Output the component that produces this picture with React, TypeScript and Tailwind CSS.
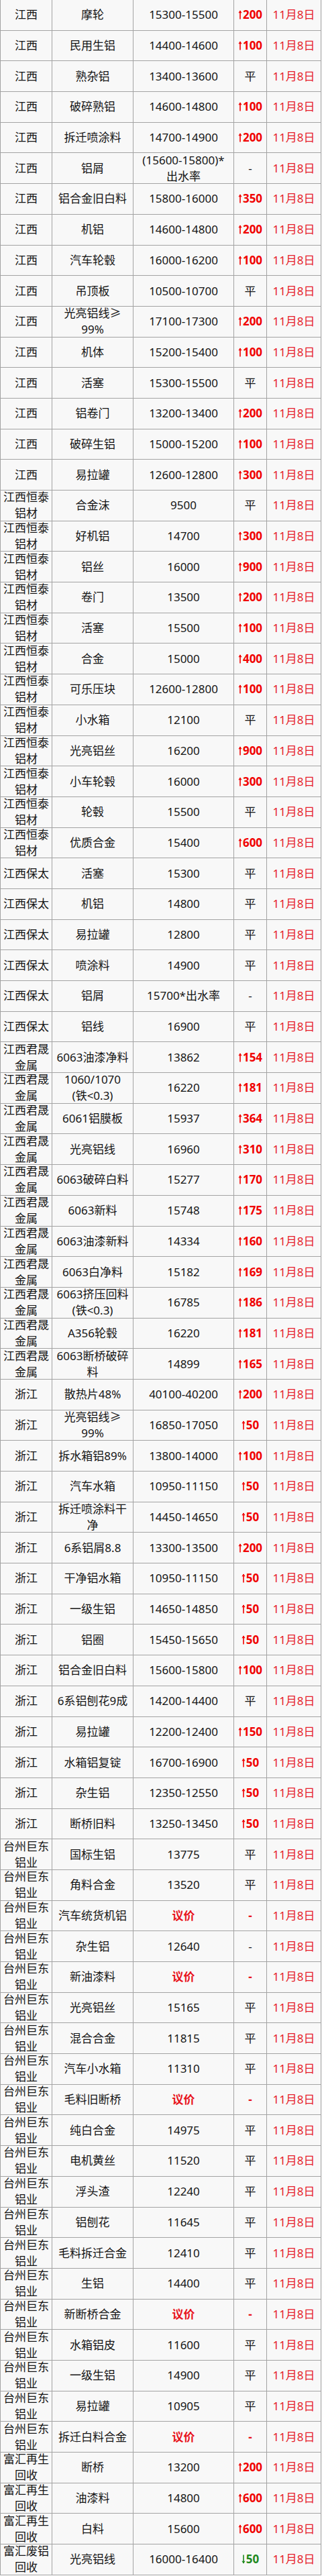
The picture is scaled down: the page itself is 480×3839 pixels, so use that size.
import { FC } from "react";

// company, item, price, change
// change: "u200" up / "d50" down / "平" flat / "-" plain dash / "x" red dash
type Row = [string, string, string, string];

const JX = "江西";
const HT = "江西恒泰\n铝材";
const BT = "江西保太";
const JS = "江西君晟\n金属";
const ZJ = "浙江";
const TZ = "台州巨东\n铝业";
const FH = "富汇再生\n回收";

const rows: Row[] = [
  [JX, "摩轮", "15300-15500", "u200"],
  [JX, "民用生铝", "14400-14600", "u100"],
  [JX, "熟杂铝", "13400-13600", "平"],
  [JX, "破碎熟铝", "14600-14800", "u100"],
  [JX, "拆迁喷涂料", "14700-14900", "u200"],
  [JX, "铝屑", "(15600-15800)*\n出水率", "-"],
  [JX, "铝合金旧白料", "15800-16000", "u350"],
  [JX, "机铝", "14600-14800", "u200"],
  [JX, "汽车轮毂", "16000-16200", "u100"],
  [JX, "吊顶板", "10500-10700", "平"],
  [JX, "光亮铝线≥\n99%", "17100-17300", "u200"],
  [JX, "机体", "15200-15400", "u100"],
  [JX, "活塞", "15300-15500", "平"],
  [JX, "铝卷门", "13200-13400", "u200"],
  [JX, "破碎生铝", "15000-15200", "u100"],
  [JX, "易拉罐", "12600-12800", "u300"],
  [HT, "合金沫", "9500", "平"],
  [HT, "好机铝", "14700", "u300"],
  [HT, "铝丝", "16000", "u900"],
  [HT, "卷门", "13500", "u200"],
  [HT, "活塞", "15500", "u100"],
  [HT, "合金", "15000", "u400"],
  [HT, "可乐压块", "12600-12800", "u100"],
  [HT, "小水箱", "12100", "平"],
  [HT, "光亮铝丝", "16200", "u900"],
  [HT, "小车轮毂", "16000", "u300"],
  [HT, "轮毂", "15500", "平"],
  [HT, "优质合金", "15400", "u600"],
  [BT, "活塞", "15300", "平"],
  [BT, "机铝", "14800", "平"],
  [BT, "易拉罐", "12800", "平"],
  [BT, "喷涂料", "14900", "平"],
  [BT, "铝屑", "15700*出水率", "-"],
  [BT, "铝线", "16900", "平"],
  [JS, "6063油漆净料", "13862", "u154"],
  [JS, "1060/1070\n(铁<0.3)", "16220", "u181"],
  [JS, "6061铝膜板", "15937", "u364"],
  [JS, "光亮铝线", "16960", "u310"],
  [JS, "6063破碎白料", "15277", "u170"],
  [JS, "6063新料", "15748", "u175"],
  [JS, "6063油漆新料", "14334", "u160"],
  [JS, "6063白净料", "15182", "u169"],
  [JS, "6063挤压回料\n(铁<0.3)", "16785", "u186"],
  [JS, "A356轮毂", "16220", "u181"],
  [JS, "6063断桥破碎\n料", "14899", "u165"],
  [ZJ, "散热片48%", "40100-40200", "u200"],
  [ZJ, "光亮铝线≥\n99%", "16850-17050", "u50"],
  [ZJ, "拆水箱铝89%", "13800-14000", "u100"],
  [ZJ, "汽车水箱", "10950-11150", "u50"],
  [ZJ, "拆迁喷涂料干\n净", "14450-14650", "u50"],
  [ZJ, "6系铝屑8.8", "13300-13500", "u200"],
  [ZJ, "干净铝水箱", "10950-11150", "u50"],
  [ZJ, "一级生铝", "14650-14850", "u50"],
  [ZJ, "铝圈", "15450-15650", "u50"],
  [ZJ, "铝合金旧白料", "15600-15800", "u100"],
  [ZJ, "6系铝刨花9成", "14200-14400", "平"],
  [ZJ, "易拉罐", "12200-12400", "u150"],
  [ZJ, "水箱铝复锭", "16700-16900", "u50"],
  [ZJ, "杂生铝", "12350-12550", "u50"],
  [ZJ, "断桥旧料", "13250-13450", "u50"],
  [TZ, "国标生铝", "13775", "平"],
  [TZ, "角料合金", "13520", "平"],
  [TZ, "汽车统货机铝", "议价", "x"],
  [TZ, "杂生铝", "12640", "-"],
  [TZ, "新油漆料", "议价", "x"],
  [TZ, "光亮铝丝", "15165", "平"],
  [TZ, "混合合金", "11815", "平"],
  [TZ, "汽车小水箱", "11310", "平"],
  [TZ, "毛料旧断桥", "议价", "x"],
  [TZ, "纯白合金", "14975", "平"],
  [TZ, "电机黄丝", "11520", "平"],
  [TZ, "浮头渣", "12240", "平"],
  [TZ, "铝刨花", "11645", "平"],
  [TZ, "毛料拆迁合金", "12410", "平"],
  [TZ, "生铝", "14400", "平"],
  [TZ, "新断桥合金", "议价", "x"],
  [TZ, "水箱铝皮", "11600", "平"],
  [TZ, "一级生铝", "14900", "平"],
  [TZ, "易拉罐", "10905", "平"],
  [TZ, "拆迁白料合金", "议价", "x"],
  [FH, "断桥", "13200", "u200"],
  [FH, "油漆料", "14800", "u600"],
  [FH, "白料", "15600", "u600"],
  ["富汇废铝\n回收", "光亮铝线", "16000-16400", "d50"],
];

const Arrow: FC<{ down?: boolean }> = ({ down }) => (
  <svg width="6" height="14" viewBox="0 0 6 14" className={down ? "mr-[1px] rotate-180" : "mr-[1px]"}>
    <path d="M3 1 L3 13.5" stroke="currentColor" strokeWidth="1.6" />
    <path d="M0.4 4.2 L3 0.6 L5.6 4.2 Z" fill="currentColor" />
  </svg>
);

const Change: FC<{ value: string }> = ({ value }) => {
  if (value.startsWith("u")) {
    return (
      <span className="flex items-center font-bold text-[#f00000]">
        <Arrow />
        {value.slice(1)}
      </span>
    );
  }
  if (value.startsWith("d")) {
    return (
      <span className="flex items-center font-bold text-[#1f8a1f]">
        <Arrow down />
        {value.slice(1)}
      </span>
    );
  }
  if (value === "x") return <span className="font-bold text-[#e8141c]">-</span>;
  return <span>{value}</span>;
};

const cell =
  "flex items-center justify-center overflow-hidden text-center whitespace-pre-line leading-[24px] border-r border-b border-[#a3a3a3]";

export default function App() {
  return (
    <div
      className="w-[480px] bg-[#f8f8f8] text-[17px] text-[#151515]"
      style={{ fontFamily: '"Noto Sans", "Noto Sans CJK SC", sans-serif' }}
    >
      <div className="border-l border-[#a3a3a3]">
        {rows.map(([company, item, price, change], i) => (
          <div key={i} className="grid h-[45.7px] grid-cols-[77px_121px_150px_49px_81px]">
            <div className={cell}>{company}</div>
            <div className={cell}>{item}</div>
            <div className={cell}>
              {price === "议价" ? <span className="font-bold text-[#e8141c]">议价</span> : price}
            </div>
            <div className={cell}>
              <Change value={change} />
            </div>
            <div className={cell + " text-[#e61e2a]"}>11月8日</div>
          </div>
        ))}
      </div>
    </div>
  );
}
